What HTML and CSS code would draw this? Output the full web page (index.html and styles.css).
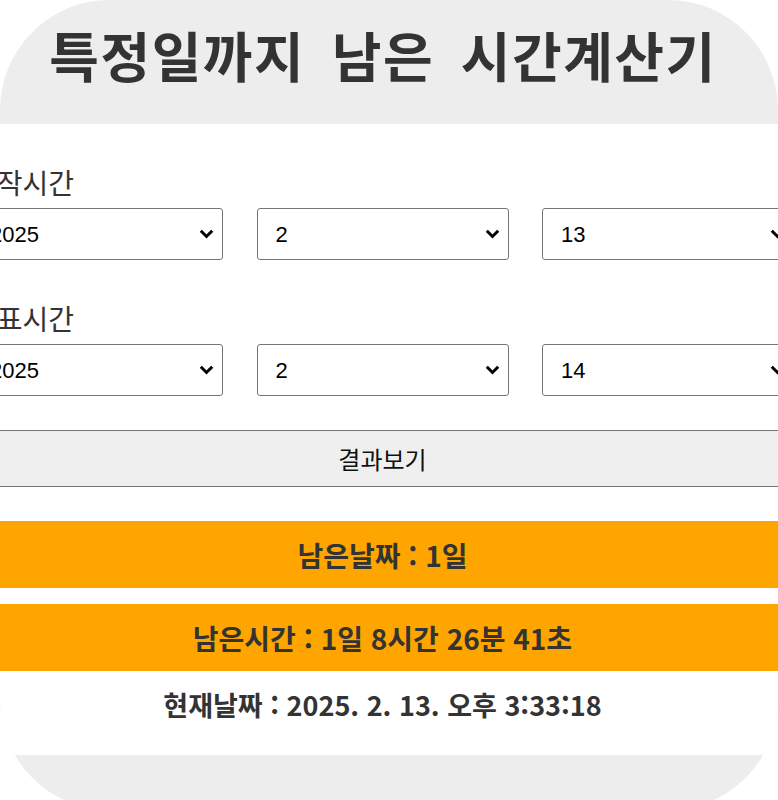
FILE: index.html
```html
<!DOCTYPE html>
<html lang="ko">
<head>
<meta charset="utf-8">
<title>특정일까지 남은 시간계산기</title>
<link rel="stylesheet" href="styles.css">
</head>
<body>
<div class="card">
  <header class="head">
    <h1 class="title">특정일까지 남은 시간계산기</h1>
  </header>
  <main class="body">
    <div class="inner">
      <section class="field">
        <label class="label">시작시간</label>
        <div class="selects">
          <select class="sel"><option>2025</option></select>
          <select class="sel"><option>2</option></select>
          <select class="sel"><option>13</option></select>
        </div>
      </section>
      <section class="field field-2">
        <label class="label">목표시간</label>
        <div class="selects">
          <select class="sel"><option>2025</option></select>
          <select class="sel"><option>2</option></select>
          <select class="sel"><option>14</option></select>
        </div>
      </section>
      <button class="btn" type="button">결과보기</button>
      <div class="result result-1">남은날짜 : 1일</div>
      <div class="result result-2">남은시간 : 1일 8시간 26분 41초</div>
      <p class="now">현재날짜 : 2025. 2. 13. 오후 3:33:18</p>
    </div>
  </main>
  <footer class="foot"></footer>
</div>
</body>
</html>
```

FILE: styles.css
```css
html, body {
  margin: 0;
  padding: 0;
  overflow: hidden;
  background: #ffffff;
}

body {
  font-family: "Noto Sans CJK KR", "Noto Sans", sans-serif;
  color: #333333;
}

.card {
  width: 778px;
  height: 810px;
  border-radius: 110px;
  background: #ededed;
  overflow: hidden;
  display: flex;
  flex-direction: column;
}

.head {
  height: 124px;
  box-sizing: border-box;
  padding-top: 28px;
  padding-right: 12px;
  text-align: center;
}

.title {
  margin: 0;
  font-size: 54px;
  line-height: 54px;
  font-weight: 700;
  letter-spacing: 1.5px;
  word-spacing: 10px;
  color: #333333;
  white-space: nowrap;
}

.body {
  background: #ffffff;
  height: 631px;
  box-sizing: border-box;
  padding-top: 44px;
}

.inner {
  width: 823px;
  margin-left: -29px;
  display: flex;
  flex-direction: column;
}

.field {
  display: flex;
  flex-direction: column;
  gap: 12px;
}

.field-2 {
  margin-top: 44px;
}

.label {
  font-size: 28px;
  line-height: 28px;
  color: #333333;
}

.selects {
  display: grid;
  grid-template-columns: repeat(3, 252px);
  column-gap: 33.5px;
}

.sel {
  appearance: none;
  -webkit-appearance: none;
  height: 52px;
  box-sizing: border-box;
  margin: 0;
  padding: 0 0 0 18px;
  border: 1px solid #767676;
  border-radius: 3px;
  background-color: #ffffff;
  background-image: url("data:image/svg+xml,%3Csvg xmlns='http://www.w3.org/2000/svg' width='15' height='10' viewBox='0 0 15 10'%3E%3Cpath d='M1.8 1.8 L7.5 7.5 L13.2 1.8' fill='none' stroke='%23000' stroke-width='3'/%3E%3C/svg%3E");
  background-repeat: no-repeat;
  background-position: right 8px center;
  font-family: "Liberation Sans", Arial, sans-serif;
  font-size: 22px;
  color: #000000;
}

.btn {
  margin-top: 34px;
  height: 57px;
  box-sizing: border-box;
  border: 1px solid #767676;
  border-radius: 2px;
  background: #efefef;
  font-family: "Noto Sans CJK KR", "Noto Sans", sans-serif;
  font-size: 24px;
  color: #111111;
  padding: 0;
}

.result {
  background: #ffa500;
  height: 67px;
  display: flex;
  align-items: center;
  justify-content: center;
  font-size: 28px;
  font-weight: 700;
  color: #333333;
}

.result-1 {
  margin-top: 34px;
}

.result-2 {
  margin-top: 16px;
}

.now {
  margin: 20px 0 0;
  text-align: center;
  font-size: 27px;
  line-height: 27px;
  font-weight: 700;
  color: #333333;
}

.foot {
  flex: 1;
}
```
